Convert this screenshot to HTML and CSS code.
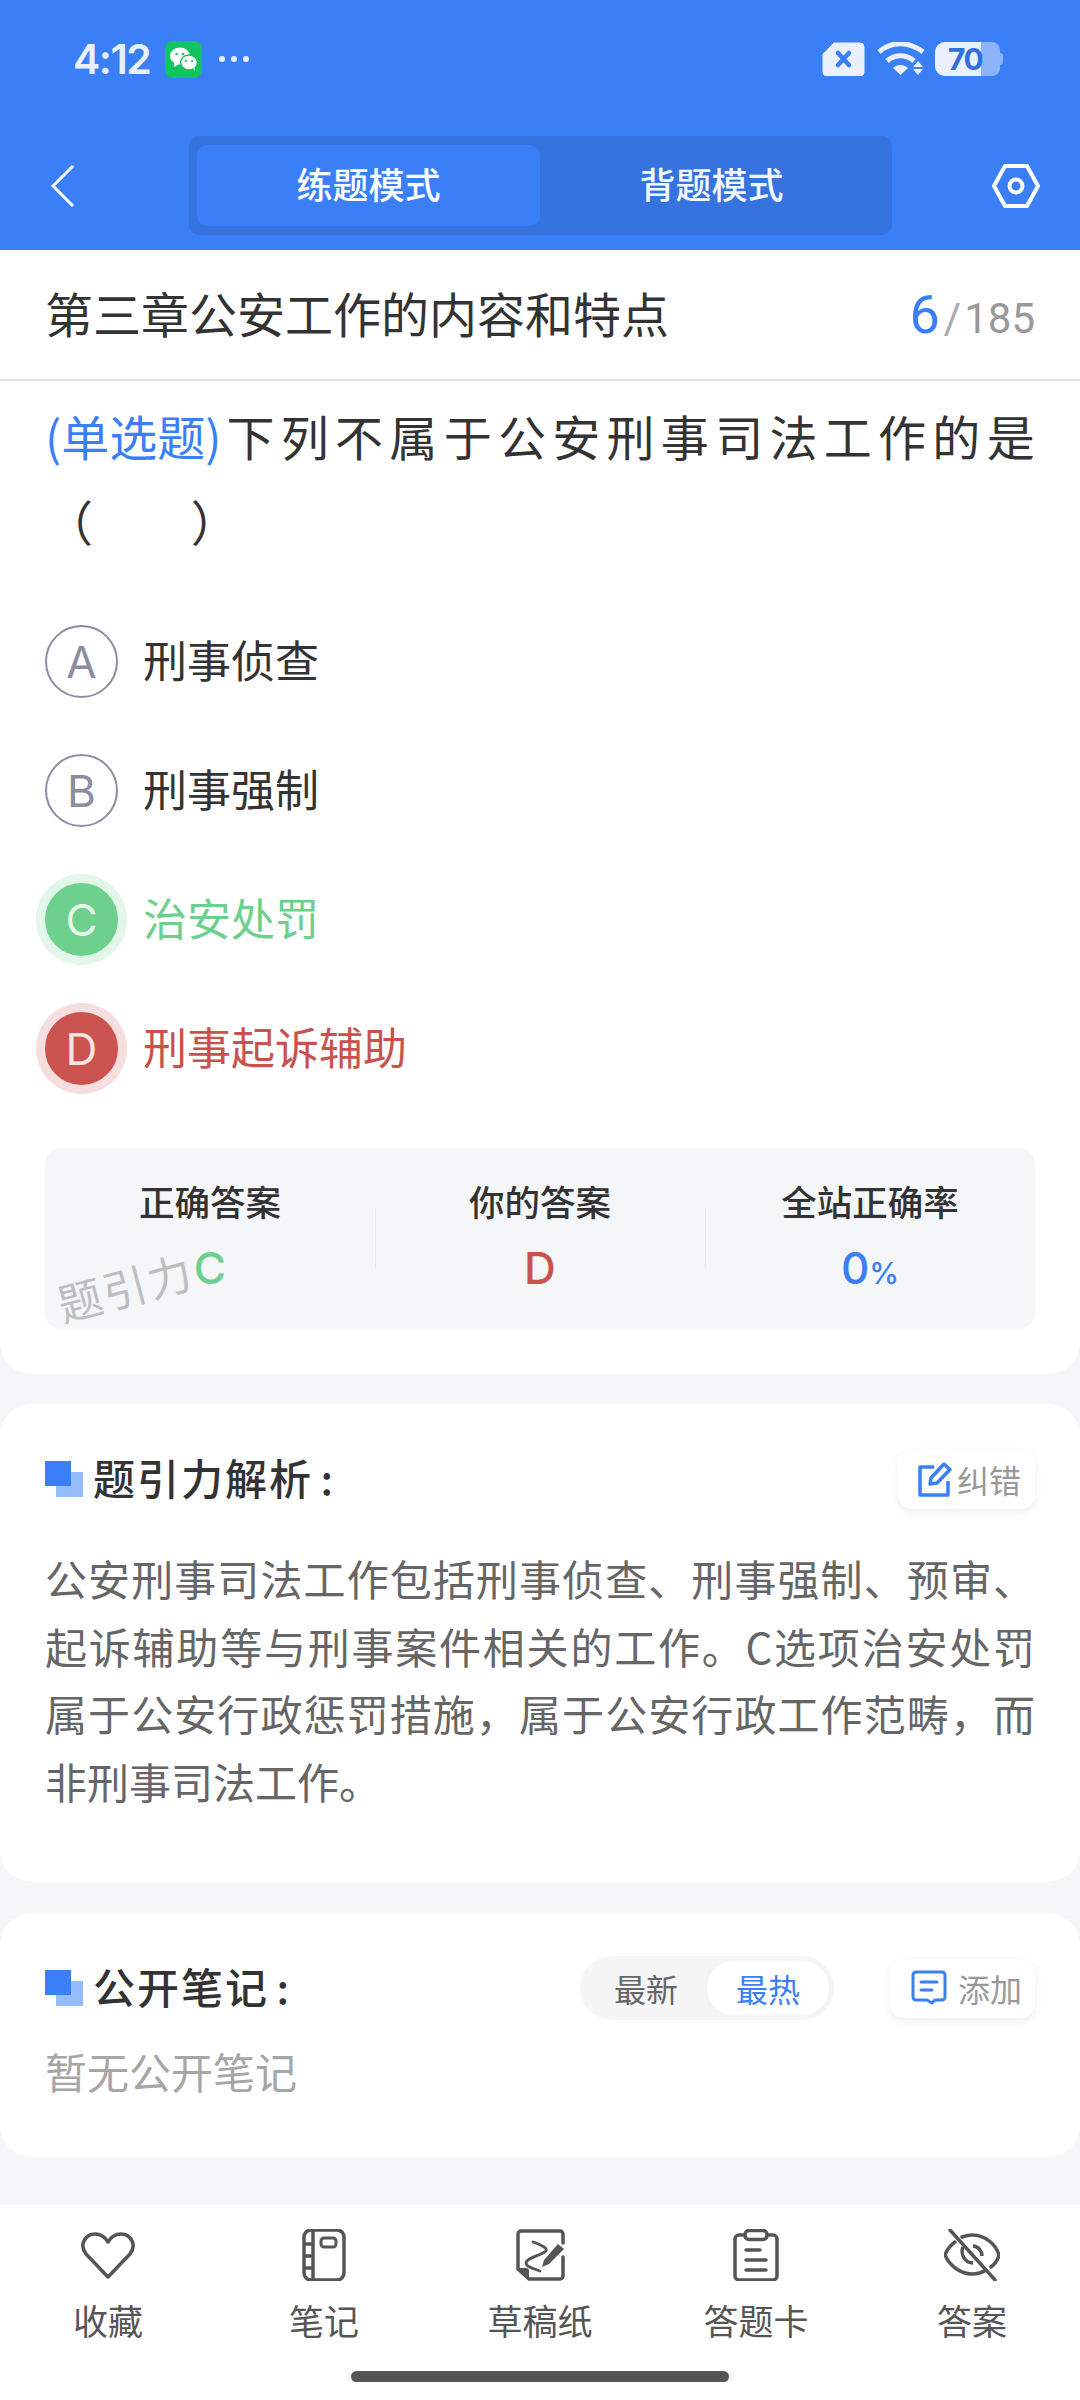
FILE: index.html
```html
<!DOCTYPE html>
<html lang="zh">
<head>
<meta charset="utf-8">
<title>练题模式</title>
<link rel="stylesheet" href="styles.css">
</head>
<body>
<div class="page">
  <header class="top">
    <div class="status">
      <div class="status-left">
        <span class="time">4:12</span>
        <svg class="wechat" viewBox="0 0 37 37"><rect width="37" height="37" rx="8" fill="#12c45f"/><ellipse cx="15" cy="15" rx="10" ry="8.5" fill="#fff"/><path d="M9 21l0 5 5-3z" fill="#fff"/><ellipse cx="24" cy="21.500" rx="8.500" ry="7.500" fill="#fff" stroke="#12c45f" stroke-width="1.500"/><path d="M28 27l2 3-.5-4z" fill="#fff"/><circle cx="11.500" cy="13" r="1.200" fill="#12c45f"/><circle cx="18" cy="13" r="1.200" fill="#12c45f"/><circle cx="21" cy="20" r="1.100" fill="#12c45f"/><circle cx="27" cy="20" r="1.100" fill="#12c45f"/></svg>
        <span class="dots"><i></i><i></i><i></i></span>
      </div>
      <div class="status-right">
        <svg class="sim" viewBox="0 0 43 34"><path d="M12 1h26a4 4 0 0 1 4 4v25a4 4 0 0 1-4 4H5a4 4 0 0 1-4-4V12z" fill="#eaf0fe" stroke="#eaf0fe" stroke-linejoin="round"/><path d="M16 11l11 12M27 11L16 23" stroke="#3b7ff7" stroke-width="4.500" stroke-linecap="round"/></svg>
        <svg class="wifi" viewBox="0 0 48 34"><path d="M2 10C14-1 32-1 46 10" fill="none" stroke="#eaf0fe" stroke-width="5"/><path d="M10 19c8-7 19-7 27 0" fill="none" stroke="#eaf0fe" stroke-width="5"/><path d="M16 26c4-4 11-4 15 0l-7.500 7z" fill="#eaf0fe"/><path d="M41 19l5 6H36zM36 27h10l-5 6z" fill="#eaf0fe"/></svg>
        <div class="battery"><div class="battery-fill"></div><span class="battery-num">70</span><span class="battery-cap"></span></div>
      </div>
    </div>
    <nav class="modebar">
      <svg class="back" viewBox="0 0 24 42"><path d="M22 1L2 21l20 20" fill="none" stroke="#fff" stroke-width="3"/></svg>
      <div class="tabs">
        <span class="tab tab-on">练题模式</span>
        <span class="tab">背题模式</span>
      </div>
      <svg class="hex" viewBox="0 0 48 44"><path d="M13 2h22l11 20-11 20H13L2 22z" fill="none" stroke="#fff" stroke-width="4" stroke-linejoin="round"/><circle cx="24" cy="22" r="6.500" fill="none" stroke="#fff" stroke-width="4"/></svg>
    </nav>
  </header>

  <section class="card card-question">
    <div class="chapter">
      <h1 class="chapter-name">第三章公安工作的内容和特点</h1>
      <div class="count"><b>6</b><span class="slash">/</span><span>185</span></div>
    </div>
    <p class="stem"><span class="kind">(单选题)</span>下列不属于公安刑事司法工作的是<br><span class="blank">（&#12288;&nbsp;）</span></p>
    <ul class="options">
      <li class="option"><span class="mark">A</span><span class="option-text">刑事侦查</span></li>
      <li class="option"><span class="mark">B</span><span class="option-text">刑事强制</span></li>
      <li class="option is-right"><span class="mark">C</span><span class="option-text">治安处罚</span></li>
      <li class="option is-wrong"><span class="mark">D</span><span class="option-text">刑事起诉辅助</span></li>
    </ul>
    <div class="stats">
      <div class="stat"><div class="stat-label">正确答案</div><div class="stat-value v-right">C</div></div>
      <div class="stat"><div class="stat-label">你的答案</div><div class="stat-value v-wrong">D</div></div>
      <div class="stat"><div class="stat-label">全站正确率</div><div class="stat-value v-rate">0<small>%</small></div></div>
      <span class="watermark">题引力</span>
    </div>
  </section>

  <section class="card card-analysis">
    <div class="sec-head">
      <span class="sec-mark"></span>
      <h2 class="sec-title">题引力解析 :</h2>
      <span class="chip chip-fix">
        <svg class="chip-icon" viewBox="0 0 36 36"><path d="M17 6H3v28h28V20" fill="none" stroke="#3b7ff7" stroke-width="3.500" stroke-linejoin="round"/><path d="M14 17L27 3l6 5.500L20 22l-7 1z" fill="none" stroke="#3b7ff7" stroke-width="3.500" stroke-linejoin="round"/></svg>纠错
      </span>
    </div>
    <p class="analysis">公安刑事司法工作包括刑事侦查、刑事强制、预审、起诉辅助等与刑事案件相关的工作。C选项治安处罚属于公安行政惩罚措施，属于公安行政工作范畴，而非刑事司法工作。</p>
  </section>

  <section class="card card-notes">
    <div class="sec-head">
      <span class="sec-mark"></span>
      <h2 class="sec-title">公开笔记 :</h2>
      <div class="sort"><span class="sort-item">最新</span><span class="sort-item sort-on">最热</span></div>
      <span class="chip chip-add">
        <svg class="chip-icon" viewBox="0 0 36 36"><path d="M5 2h26a3 3 0 0 1 3 3v22a3 3 0 0 1-3 3h-7l-3 3-5-3H5a3 3 0 0 1-3-3V5a3 3 0 0 1 3-3z" fill="none" stroke="#3b7ff7" stroke-width="3" stroke-linejoin="round"/><path d="M10 12h16M10 20h11" stroke="#3b7ff7" stroke-width="3" stroke-linecap="round"/></svg>添加
      </span>
    </div>
    <p class="empty">暂无公开笔记</p>
  </section>

  <footer class="tabbar">
    <div class="tool">
      <svg class="tool-icon" viewBox="0 0 56 52"><path d="M28 48L6 25C-1 16 5 5 15 5c6 0 10 3 13 8 3-5 7-8 13-8 10 0 16 11 9 20z" fill="none" stroke="#555" stroke-width="3.500" stroke-linejoin="round"/></svg>
      <span>收藏</span>
    </div>
    <div class="tool">
      <svg class="tool-icon" viewBox="0 0 56 52"><rect x="8" y="1" width="40" height="50" rx="7" fill="none" stroke="#555" stroke-width="3.500"/><path d="M17 1v50M8 15h9M8 27h9M8 39h9" stroke="#555" stroke-width="3.500"/><rect x="25" y="9" width="15" height="9" rx="3" fill="none" stroke="#555" stroke-width="3"/></svg>
      <span>笔记</span>
    </div>
    <div class="tool">
      <svg class="tool-icon" viewBox="0 0 56 52"><path d="M51 14V5a3 3 0 0 0-3-3H9a3 3 0 0 0-3 3v35l11 10h31a3 3 0 0 0 3-3V28" fill="none" stroke="#555" stroke-width="3.500" stroke-linecap="round"/><path d="M6 39h8a3 3 0 0 1 3 3v8z" fill="#555"/><path d="M21 13c8 3 15 6 13 9-4 4-20 7-20 12 0 4 9 6 14 8" fill="none" stroke="#555" stroke-width="2.800" stroke-linecap="round"/><path d="M46 15l6 5-15 15-7 3 2-7z" fill="#555"/></svg>
      <span>草稿纸</span>
    </div>
    <div class="tool">
      <svg class="tool-icon" viewBox="0 0 56 52"><path d="M15 6H11a4 4 0 0 0-4 4v37a4 4 0 0 0 4 4h34a4 4 0 0 0 4-4V10a4 4 0 0 0-4-4h-4" fill="none" stroke="#555" stroke-width="3.500" stroke-linecap="round"/><rect x="17" y="1.500" width="22" height="9" rx="4" fill="none" stroke="#555" stroke-width="3.500"/><path d="M18 21h14M18 31h20M18 41h20" stroke="#555" stroke-width="3.500" stroke-linecap="round"/></svg>
      <span>答题卡</span>
    </div>
    <div class="tool">
      <svg class="tool-icon" viewBox="0 0 56 52"><path d="M11 13C4 18 2 23 1 26c4 10 15 19 27 19 6 0 11-2 14-4M18 8c3-1 6-2 10-2 14 0 24 10 27 20-1 4-4 9-8 12" fill="none" stroke="#555" stroke-width="3.500" stroke-linecap="round"/><path d="M19 18c-3 7 2 16 10 16M29 17c5 0 9 5 9 10" fill="none" stroke="#555" stroke-width="3.500"/><path d="M6 1l45 50" stroke="#555" stroke-width="3.500" stroke-linecap="round"/></svg>
      <span>答案</span>
    </div>
    <span class="home-bar"></span>
  </footer>
</div>
</body>
</html>
```

FILE: styles.css
```css
* { box-sizing: border-box; }

html, body { margin: 0; padding: 0; }

body {
  width: 1080px;
  height: 2400px;
  overflow: hidden;
  background: #f4f6f8;
  font-family: "Noto Sans CJK SC", "Noto Sans", sans-serif;
  color: #333;
}

.page {
  height: 2400px;
  display: flex;
  flex-direction: column;
  position: relative;
}

/* Blue header: status row and mode switch */
.top {
  height: 250px;
  background: #3b7ff7;
  padding-top: 36px;
}

.status {
  height: 46px;
  padding: 0 80px 0 73px;
  display: flex;
  justify-content: space-between;
  align-items: center;
}

.status-left, .status-right { display: flex; align-items: center; }

.time {
  font-family: Inter, Roboto, sans-serif;
  font-size: 41px;
  font-weight: 600;
  letter-spacing: -1.500px;
  color: #e9f0fe;
  width: 92px;
}

.wechat { width: 37px; height: 37px; }

.dots { display: flex; gap: 6px; margin-left: 17px; }
.dots i { width: 6px; height: 6px; border-radius: 50%; background: #e9f0fe; }

.sim { width: 43px; height: 34px; }
.wifi { width: 48px; height: 34px; margin-left: 12px; }

.battery {
  position: relative;
  width: 65px;
  height: 34px;
  margin-left: 10px;
  background: #8db3fa;
  border-radius: 10px 8px 8px 10px;
}

.battery-fill {
  width: 46px;
  height: 34px;
  background: #eaf0fe;
  border-radius: 10px 0 0 10px;
}

.battery-num {
  position: absolute;
  left: 13px;
  top: 0;
  line-height: 34px;
  font-family: Inter, Roboto, sans-serif;
  font-size: 30px;
  font-weight: 700;
  letter-spacing: -1.500px;
  color: #336fdc;
}

.battery-cap {
  position: absolute;
  right: -3px;
  top: 11px;
  width: 4px;
  height: 12px;
  border-radius: 0 3px 3px 0;
  background: #8db3fa;
}

.modebar {
  height: 99px;
  margin-top: 54px;
  padding: 0 40px 0 51px;
  display: flex;
  align-items: center;
}

.back { width: 24px; height: 42px; }

.tabs {
  width: 703px;
  height: 99px;
  margin-left: 114px;
  padding: 9px 8px;
  display: flex;
  background: #3673de;
  border-radius: 10px;
}

.tab {
  width: 343px;
  padding-bottom: 5px;
  display: flex;
  align-items: center;
  justify-content: center;
  font-size: 36px;
  font-weight: 500;
  color: #f2f6fe;
  border-radius: 10px;
}

.tab-on { background: #3b7ff7; color: #fff; }

.hex { width: 48px; height: 44px; margin-left: 100px; }

/* White content cards */
.card {
  background: #fff;
  border-radius: 0 0 32px 32px;
}

.card-question { height: 1124px; }

.chapter {
  height: 131px;
  padding: 0 45px;
  border-bottom: 2px solid #e2e3e5;
  display: flex;
  justify-content: space-between;
  align-items: center;
}

.chapter-name {
  margin: 0 0 6px;
  font-size: 48px;
  font-weight: 400;
  color: #333;
}

.count {
  display: flex;
  align-items: baseline;
  font-family: Roboto, sans-serif;
  font-size: 42px;
  color: #999;
}

.count b { font-size: 54px; font-weight: 400; color: #3b7ff7; }
.slash { margin: 0 3px 0 4px; color: #aaa; }

.stem {
  margin: 12px 0 0;
  padding-left: 45px;
  font-size: 48px;
  line-height: 85px;
  letter-spacing: 6.300px;
  white-space: nowrap;
  color: #333;
}

.kind { color: #3b7ff7; letter-spacing: 0; margin-right: 5px; }
.blank { letter-spacing: 13px; }

.options {
  list-style: none;
  margin: 34px 0 0;
  padding: 0 0 0 45px;
}

.option {
  height: 129px;
  display: flex;
  align-items: center;
  gap: 25px;
  font-size: 44px;
  color: #333;
}

.option-text { margin-bottom: 6px; }

.mark {
  width: 73px;
  height: 73px;
  border-radius: 50%;
  border: 2px solid #8b8da3;
  color: #8b8da3;
  display: flex;
  align-items: center;
  justify-content: center;
  font-family: Inter, sans-serif;
  font-size: 44px;
}

.is-right { color: #6dcf8c; }
.is-right .mark { background: #6dd08c; border-color: #6dd08c; color: #e6f8ec; box-shadow: 0 0 0 9px #e2f6ea; }

.is-wrong { color: #c8524e; }
.is-wrong .mark { background: #cc5450; border-color: #cc5450; color: #f8e4e3; box-shadow: 0 0 0 9px #f5dedd; }

.stats {
  position: relative;
  width: 990px;
  height: 181px;
  margin: 35px 0 0 45px;
  background: #f4f6f8;
  border-radius: 16px;
  display: grid;
  grid-template-columns: 1fr 1fr 1fr;
}

.stat { position: relative; padding-top: 29px; text-align: center; }

.stat + .stat::before {
  content: "";
  position: absolute;
  left: 0;
  top: 60px;
  height: 60px;
  width: 1px;
  background: #e9eaed;
}

.stat-label { font-size: 35.500px; font-weight: 500; line-height: 48px; color: #333; }

.stat-value {
  margin-top: 20px;
  font-family: Inter, sans-serif;
  font-size: 44px;
  font-weight: 500;
  line-height: 46px;
}

.stat-value small { font-size: 30px; }

.v-right { color: #6dcf8c; }
.v-wrong { color: #c8524e; }
.v-rate { color: #3b7ff7; }

.watermark {
  position: absolute;
  left: 11px;
  top: 110px;
  font-size: 44px;
  line-height: 56px;
  color: #bdbec0;
  letter-spacing: 2px;
  transform: rotate(-15deg);
  white-space: nowrap;
}

.card-analysis {
  height: 478px;
  margin-top: 30px;
  border-radius: 32px;
  padding: 43px 45px 0;
}

.card-notes {
  height: 244px;
  margin-top: 31px;
  border-radius: 32px;
  padding: 43px 45px 0;
}

.sec-head {
  height: 64px;
  display: flex;
  align-items: center;
}

.sec-mark {
  position: relative;
  width: 38px;
  height: 36px;
  flex: none;
  background: linear-gradient(#3b7ff7, #3b7ff7) 0 0 / 26px 25px no-repeat,
              linear-gradient(#94bdfb, #94bdfb) 11px 11px / 27px 25px no-repeat;
}

.sec-title {
  margin: 0 0 6px 10px;
  flex: 1;
  font-size: 42px;
  font-weight: 500;
  letter-spacing: 2px;
  word-spacing: -4px;
  color: #333;
}

.chip {
  height: 59px;
  display: flex;
  align-items: center;
  background: #fff;
  border-radius: 14px;
  box-shadow: 0 3px 10px rgba(0, 0, 0, 0.07);
  font-size: 32px;
  color: #999;
}

.chip-fix { width: 137px; padding-left: 19px; gap: 4px; }
.chip-add { width: 145px; padding-left: 21px; gap: 11px; }
.chip-icon { width: 36px; height: 36px; }

.analysis {
  margin: 33px 0 0;
  font-size: 42px;
  line-height: 67.500px;
  text-align: justify;
  color: #666;
}

.sort {
  width: 254px;
  height: 64px;
  margin-right: 56px;
  padding: 5px;
  display: flex;
  justify-content: space-between;
  background: #f5f5f5;
  border-radius: 32px;
}

.sort-item {
  width: 122px;
  display: flex;
  align-items: center;
  justify-content: center;
  font-size: 32px;
  color: #666;
  border-radius: 27px;
}

.sort-on { background: #fff; color: #3b7ff7; }

.empty {
  margin: 21px 0 0;
  font-size: 42px;
  line-height: 60px;
  color: #a6a6a6;
}

/* Bottom tool row */
.tabbar {
  position: absolute;
  left: 0;
  right: 0;
  bottom: 0;
  height: 195px;
  padding-top: 24px;
  background: #fff;
  display: grid;
  grid-template-columns: repeat(5, 216px);
}

.tool {
  display: flex;
  flex-direction: column;
  align-items: center;
  font-size: 35px;
  line-height: 48px;
  color: #555;
}

.tool-icon { width: 56px; height: 52px; margin-bottom: 15px; }

.home-bar {
  position: absolute;
  left: 351px;
  bottom: 18px;
  width: 378px;
  height: 11px;
  border-radius: 6px;
  background: #555;
}
```
